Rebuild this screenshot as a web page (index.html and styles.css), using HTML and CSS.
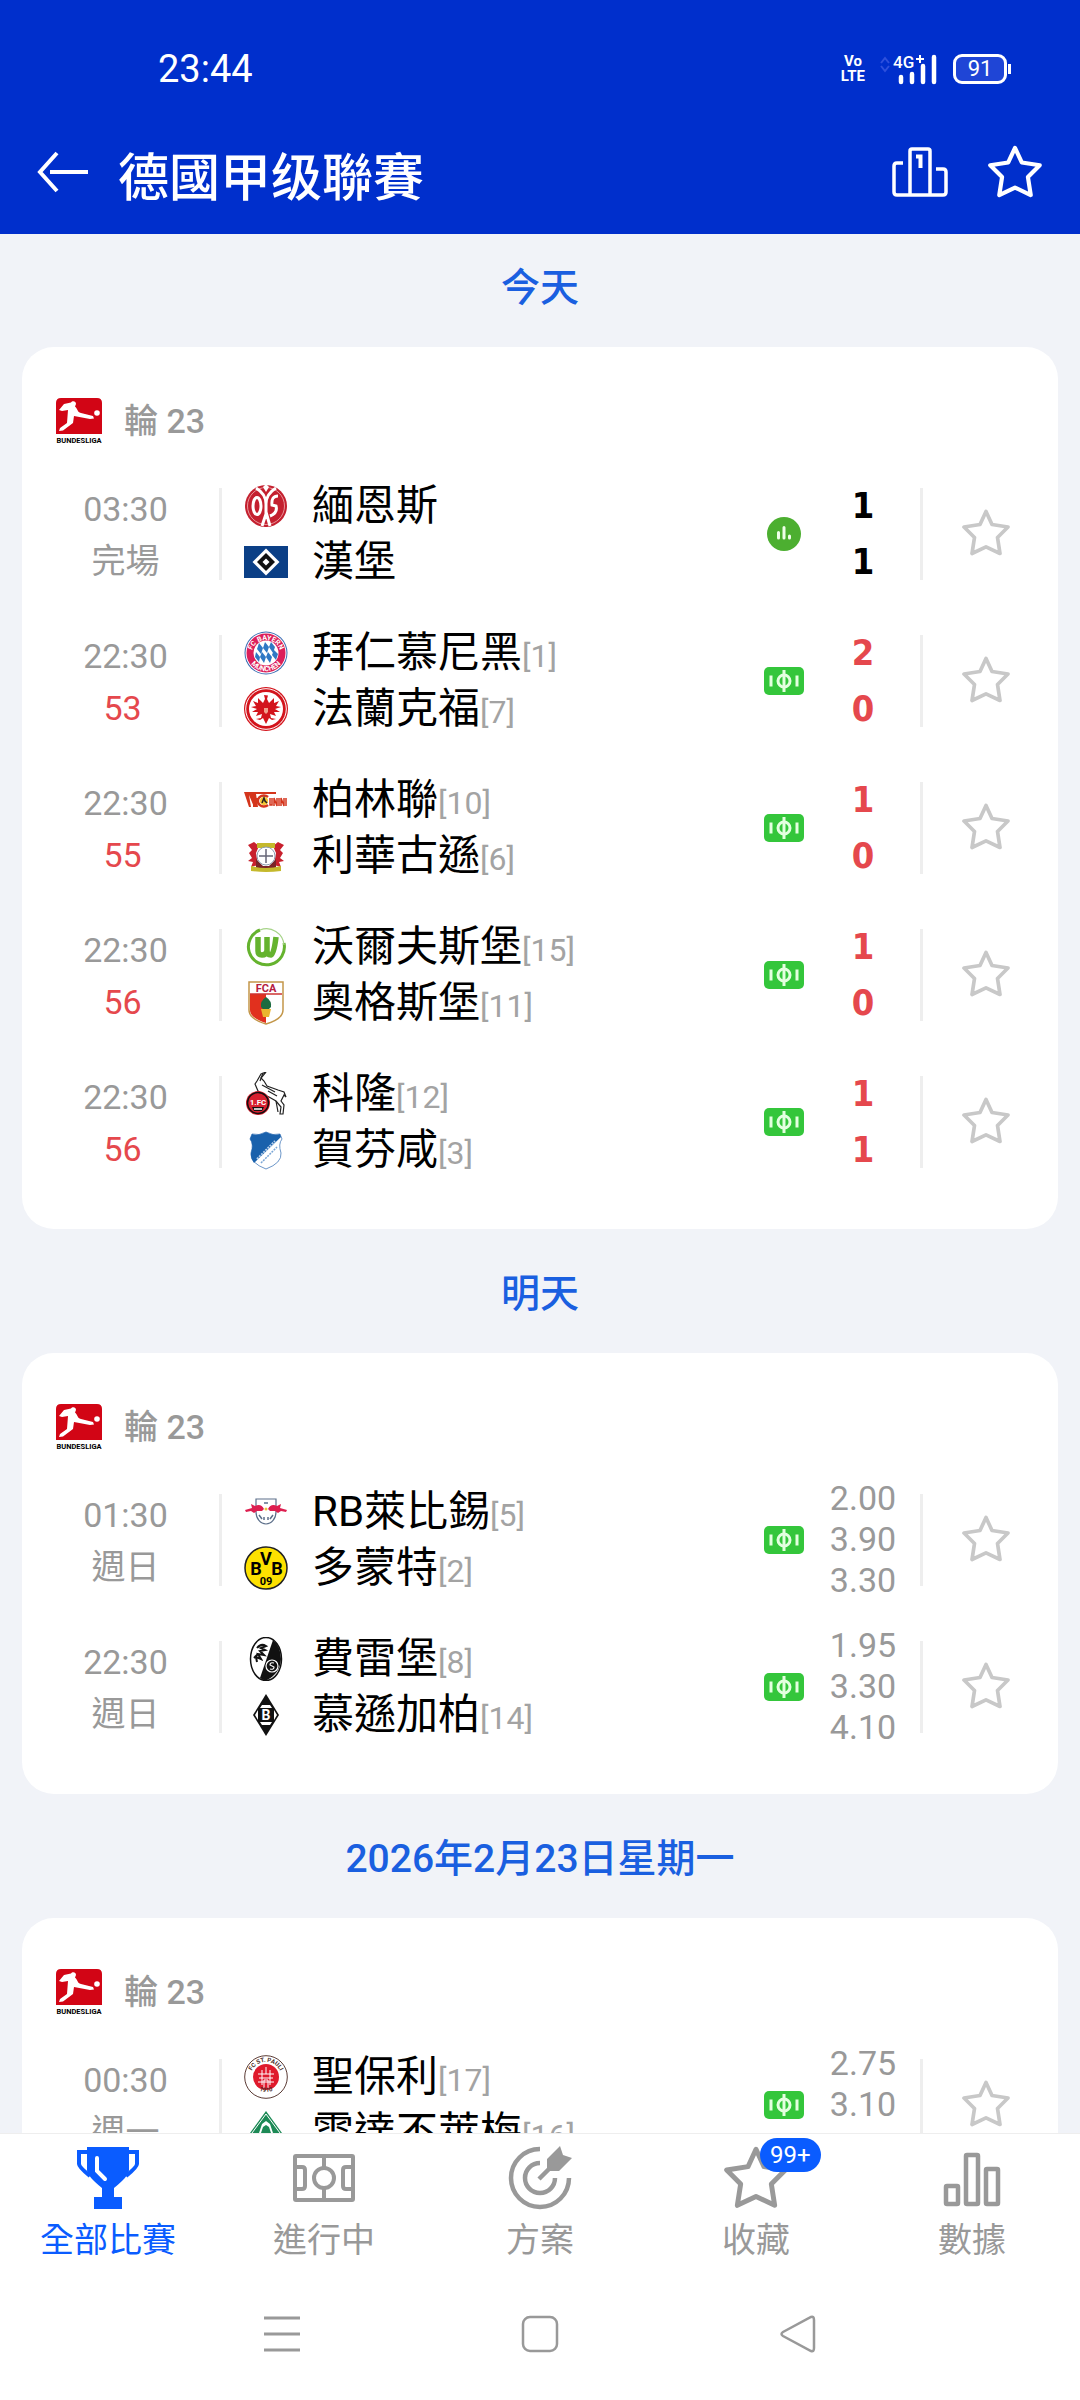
FILE: index.html
```
<!DOCTYPE html>
<html lang="zh-Hant">
	<head>
		<meta charset="UTF-8">
		<meta name="viewport" content="width=device-width, initial-scale=1">
		<title>德國甲级聯賽</title>
		<link rel="stylesheet" href="styles.css">
	</head>
	<body>
		<!-- 圖標 -->
		<svg class="sprite" aria-hidden="true">
			<symbol id="star" viewBox="0 0 48 48">
				<path d="M24 2.5L30 15.5L46 18L35.5 28.5L38 44.5L24 37.8L10 44.5L12.5 28.5L2 18L18 15.5Z" fill="none" stroke="currentColor" stroke-width="3.7" stroke-linejoin="round"/>
			</symbol>
			<symbol id="live" viewBox="0 0 40 30">
				<rect x="0" y="1" width="40" height="28" rx="5" fill="#34c63b"/>
				<g fill="none" stroke="#e4ffe0" stroke-width="3">
					<path d="M7 9.500V20.500M33 9.500V20.500M20 4V26"/>
					<circle cx="20" cy="15" r="6"/>
				</g>
			</symbol>
		</svg>

		<header class="header">
			<div class="status">
				<span class="clock">23:44</span>
				<div class="status-icons">
					<span class="volte"><b>Vo</b><b>LTE</b></span>
					<svg width="60" height="32" viewBox="0 0 60 32" role="img" aria-label="4G+">
						<path d="M2 10L6 5L10 10M2 13L6 18L10 13" fill="none" stroke="#2e50dc" stroke-width="2"/>
						<text x="14" y="15" font-size="17" fill="#fff" font-family="Roboto, sans-serif" font-weight="500">4G</text>
						<path d="M37 6H45M41 2V10" stroke="#fff" stroke-width="2"/>
						<path d="M22 24V29M33 21V29M44 13V29M55 4V29" stroke="#fff" stroke-width="4.500" stroke-linecap="round"/>
					</svg>
					<span class="battery">91</span>
				</div>
			</div>
			<div class="title-bar">
				<button class="icon-btn" type="button" aria-label="返回">
					<svg width="54" height="44" viewBox="0 0 54 44"><path d="M21 3L4 22L21 41M14 22H52" fill="none" stroke="#fff" stroke-width="4"/></svg>
				</button>
				<h1>德國甲级聯賽</h1>
				<button class="icon-btn" type="button" aria-label="排名">
					<svg width="56" height="52" viewBox="0 0 56 52"><path d="M18 49V5Q18 3 20 3H36Q38 3 38 5V49M11 17H5Q2 17 2 20V46Q2 49 5 49H51Q54 49 54 46V26Q54 23 51 23H44" fill="none" stroke="#fff" stroke-width="3.500" stroke-linejoin="round"/><path d="M24 10.500H28.500V22" fill="none" stroke="#fff" stroke-width="4"/></svg>
				</button>
				<button class="icon-btn" type="button" aria-label="收藏聯賽">
					<svg width="54" height="54"><use href="#star"/></svg>
				</button>
			</div>
		</header>

		<main class="list">
			<section class="day">
				<h2>今天</h2>
				<div class="card">
					<div class="round">
						<svg width="46" height="46" viewBox="0 0 46 46">
							<path d="M0 36V5Q0 0 5 0H41Q46 0 46 5V36Z" fill="#d20515"/>
							<path d="M15 4.500C16 2.500 20 2.500 20 6L19 8.500C22 11 21 14 25 15L37 18L38 20.500L34 21L18 18L17 25L7 32.500L3 33L4 30L11 25L12 12L6 13L3 12L8 6Z" fill="#fff"/>
							<circle cx="41" cy="15" r="2.800" fill="#fff"/>
							<text class="logo-text" x="23" y="45" font-size="7.500">BUNDESLIGA</text>
						</svg>
						<span>輪 23</span>
					</div>
					<ul>
						<li class="match">
							<div class="time"><span>03:30</span><span>完場</span></div>
							<div class="teams">
								<div class="team">
									<svg viewBox="0 0 44 44">
										<circle cx="22" cy="22" r="21" fill="#c4202f"/>
										<circle cx="22" cy="22" r="18.500" fill="none" stroke="#e9959a" stroke-width="1"/>
										<g fill="none" stroke="#fff" stroke-width="3">
											<ellipse cx="13" cy="22" rx="4" ry="8.500"/>
											<path d="M12 4Q22 10 22 20V30L18 42M32 4Q22 10 22 20M22 28L26 42M34 12Q27 12 28 21L32 22Q34 29 26 32"/>
										</g>
										<path d="M19 3L22 0L25 3L22 8Z" fill="#fff"/>
									</svg>
									<span>緬恩斯</span>
								</div>
								<div class="team">
									<svg viewBox="0 0 44 44">
										<rect y="6" width="44" height="32" fill="#0b3f86"/>
										<path d="M22 8.500L35.500 22L22 35.500L8.500 22Z" fill="#fff"/>
										<path d="M22 13L31 22L22 31L13 22Z" fill="#111"/>
										<path d="M22 18.500L25.500 22L22 25.500L18.500 22Z" fill="#fff"/>
									</svg>
									<span>漢堡</span>
								</div>
							</div>
							<svg class="tag" width="34" height="34" viewBox="0 0 34 34">
								<circle cx="17" cy="17" r="17" fill="#4caf30"/>
								<path d="M11.500 15.500V21M17 10.500V21M22.500 19V21" stroke="#efffe8" stroke-width="3" stroke-linecap="round"/>
							</svg>
							<div class="score"><b>1</b><b>1</b></div>
							<button class="fav" type="button" aria-label="收藏"><svg width="48" height="48"><use href="#star"/></svg></button>
						</li>
						<li class="match live">
							<div class="time"><span>22:30</span><span>53</span></div>
							<div class="teams">
								<div class="team">
									<svg viewBox="0 0 44 44">
										<circle cx="22" cy="22" r="21.500" fill="#3b6cb3"/>
										<circle cx="22" cy="22" r="20.500" fill="#fff"/>
										<circle cx="22" cy="22" r="19.500" fill="#dc1f5a"/>
										<circle cx="22" cy="22" r="12.500" fill="#fff"/>
										<path d="M15 12L19 17L17 23L13 18ZM21 11L25 16L23 22L19 17ZM27 11L31 16L29 22L25 16ZM12 21L16 26L15 31L11 26ZM18 21L22 26L20 32L16 26ZM24 21L28 26L26 32L22 26ZM30 19L34 23L32 29L28 24Z" fill="#2f78c4"/>
										<path id="bayern-top" d="M9 30A14.500 14.500 0 1 1 35 30" fill="none"/>
										<path id="bayern-bottom" d="M4 26A18.500 18.500 0 0 0 40 26" fill="none"/>
										<text class="logo-text white" font-size="7"><textPath href="#bayern-top" startOffset="50%">FC BAYERN</textPath></text>
										<text class="logo-text white" font-size="7"><textPath href="#bayern-bottom" startOffset="50%">MÜNCHEN</textPath></text>
									</svg>
									<span>拜仁慕尼黑<small>[1]</small></span>
								</div>
								<div class="team">
									<svg viewBox="0 0 44 44">
										<circle cx="22" cy="22" r="22" fill="#d3141c"/>
										<circle cx="22" cy="22" r="20.300" fill="none" stroke="#fff" stroke-width="1"/>
										<circle cx="22" cy="22" r="17" fill="#fff"/>
										<path d="M20 8L24 8.500L23 12L25 16L30 11L30 16L35 14L32 19L37 20L31 22L36 25L30 25L32 29L26 27L27 31L32 32L28 33L25 31L22 37L19 31L16 33L12 32L17 31L18 27L12 29L14 25L8 25L13 22L7 20L12 19L9 14L14 16L14 11L19 16L21 12Z" fill="#d3141c"/>
										<path d="M20 21H24V25L22 27L20 25Z" fill="#f0a08c"/>
									</svg>
									<span>法蘭克福<small>[7]</small></span>
								</div>
							</div>
							<svg class="tag" width="40" height="30"><use href="#live"/></svg>
							<div class="score"><b>2</b><b>0</b></div>
							<button class="fav" type="button" aria-label="收藏"><svg width="48" height="48"><use href="#star"/></svg></button>
						</li>
						<li class="match live">
							<div class="time"><span>22:30</span><span>55</span></div>
							<div class="teams">
								<div class="team">
									<svg viewBox="0 0 44 44">
										<path d="M0 14H32V16H12L14 29H10L5 17L7 29H5Z" fill="#d4351c"/>
										<path d="M10 16V29M10 21H14" stroke="#d4351c" stroke-width="2"/>
										<path d="M24 19A6 5.500 0 1 0 24 27" fill="none" stroke="#d4351c" stroke-width="2.500"/>
										<circle cx="20" cy="23" r="4" fill="#f4c531"/>
										<path d="M18 25L20 20L21 23L23 25" fill="none" stroke="#222" stroke-width="1.500"/>
										<path d="M26 20V27H28V20M30 28V20L33 28V20M35 20V28M37 28V20L40 28V20M42 20V28" fill="none" stroke="#d4351c" stroke-width="1.500"/>
									</svg>
									<span>柏林聯<small>[10]</small></span>
								</div>
								<div class="team">
									<svg viewBox="0 0 44 44">
										<path d="M4 11L10 8L15 12L12 19L14 31L7 33L9 28L4 27L8 24L5 19L8 16Z" fill="#c8202d"/>
										<path d="M40 11L34 8L29 12L32 19L30 31L37 33L35 28L40 27L36 24L39 19L36 16Z" fill="#c8202d"/>
										<path d="M13 9H31V14H13Z" fill="#c5b92c"/>
										<path d="M12 25L19 32H25L32 25V34H12Z" fill="#7a2428"/>
										<circle cx="22" cy="22" r="9" fill="#fff" stroke="#8c9cb0" stroke-width="1"/>
										<path d="M22 15V29M15 22H29" stroke="#667" stroke-width="1.500"/>
										<path d="M7 32Q22 36 37 32V37Q22 39 7 37Z" fill="#c5b92c"/>
									</svg>
									<span>利華古遜<small>[6]</small></span>
								</div>
							</div>
							<svg class="tag" width="40" height="30"><use href="#live"/></svg>
							<div class="score"><b>1</b><b>0</b></div>
							<button class="fav" type="button" aria-label="收藏"><svg width="48" height="48"><use href="#star"/></svg></button>
						</li>
						<li class="match live">
							<div class="time"><span>22:30</span><span>56</span></div>
							<div class="teams">
								<div class="team">
									<svg viewBox="0 0 44 44">
										<path d="M16 5A18 18 0 1 0 40 18" fill="none" stroke="#65b32e" stroke-width="3"/>
										<path d="M16 5A17.500 17.500 0 0 1 40 20" fill="none" stroke="#a6d388" stroke-width="1.200"/>
										<path d="M14 12V26Q14 30 18 30Q22 30 23 26V12M23 26Q23 30 27 30Q30 29 32 12" fill="none" stroke="#65b32e" stroke-width="5.500"/>
									</svg>
									<span>沃爾夫斯堡<small>[15]</small></span>
								</div>
								<div class="team">
									<svg viewBox="0 0 44 44">
										<path d="M5 1H39V29Q39 38 22 43Q5 38 5 29Z" fill="#fff" stroke="#c3974a" stroke-width="1.500"/>
										<path d="M6 13H22V42Q6 37 6 29Z" fill="#e1301e"/>
										<path d="M6 13H38" stroke="#c33" stroke-width="1.500"/>
										<text class="logo-text" x="22" y="11" font-size="11" fill="#b5203f">FCA</text>
										<path d="M22 16Q28 20 27 26L24 29H20L17 26Q16 20 22 16Z" fill="#1d6b40"/>
										<path d="M17 28H27L25 36H19Z" fill="#eab52e"/>
									</svg>
									<span>奧格斯堡<small>[11]</small></span>
								</div>
							</div>
							<svg class="tag" width="40" height="30"><use href="#live"/></svg>
							<div class="score"><b>1</b><b>0</b></div>
							<button class="fav" type="button" aria-label="收藏"><svg width="48" height="48"><use href="#star"/></svg></button>
						</li>
						<li class="match live">
							<div class="time"><span>22:30</span><span>56</span></div>
							<div class="teams">
								<div class="team">
									<svg viewBox="0 0 44 44">
										<path d="M14 19L11 12L13 9L17 2L22 0L17 6L20 9L23 14L34 18L40 20L42 25L40 23L37 29L40 33L39 42L36 42L37 35L32 29L25 25L18 22Z" fill="#fff" stroke="#222" stroke-width="1.200"/>
										<path d="M16 9L19 1M18 13L31 20M24 19L33 24M32 29L34 40" stroke="#222" stroke-width="1.200"/>
										<circle cx="14" cy="31" r="12" fill="#d8202f"/>
										<circle cx="14" cy="31" r="10.500" fill="none" stroke="#111" stroke-width="1.500"/>
										<text class="logo-text white" x="14" y="33" font-size="8">1.FC</text>
										<path d="M8 35H20L18 39H10Z" fill="#111"/>
										<path d="M10 37H18" stroke="#fff" stroke-width="1.500"/>
									</svg>
									<span>科隆<small>[12]</small></span>
								</div>
								<div class="team">
									<svg viewBox="0 0 44 44">
										<path d="M8 6Q15 8 22 4Q29 8 36 6L38 11Q34 16 37 25Q38 35 22 41Q6 35 7 25Q10 16 6 11Z" fill="#fff" stroke="#6d97c9" stroke-width="1"/>
										<path d="M8 6Q15 8 22 4Q29 8 36 6L37 9L10 35Q6 30 7 25Q10 16 6 11Z" fill="#1961ac"/>
										<path d="M13 31L31 13" stroke="#b8d0ea" stroke-width="2" stroke-dasharray="2 1"/>
										<path d="M17 35L33 19" stroke="#7ba7d6" stroke-width="1.500" stroke-dasharray="2 1"/>
									</svg>
									<span>賀芬咸<small>[3]</small></span>
								</div>
							</div>
							<svg class="tag" width="40" height="30"><use href="#live"/></svg>
							<div class="score"><b>1</b><b>1</b></div>
							<button class="fav" type="button" aria-label="收藏"><svg width="48" height="48"><use href="#star"/></svg></button>
						</li>
					</ul>
				</div>
			</section>

			<section class="day">
				<h2>明天</h2>
				<div class="card">
					<div class="round">
						<svg width="46" height="46" viewBox="0 0 46 46">
							<path d="M0 36V5Q0 0 5 0H41Q46 0 46 5V36Z" fill="#d20515"/>
							<path d="M15 4.500C16 2.500 20 2.500 20 6L19 8.500C22 11 21 14 25 15L37 18L38 20.500L34 21L18 18L17 25L7 32.500L3 33L4 30L11 25L12 12L6 13L3 12L8 6Z" fill="#fff"/>
							<circle cx="41" cy="15" r="2.800" fill="#fff"/>
							<text class="logo-text" x="23" y="45" font-size="7.500">BUNDESLIGA</text>
						</svg>
						<span>輪 23</span>
					</div>
					<ul>
						<li class="match">
							<div class="time"><span>01:30</span><span>週日</span></div>
							<div class="teams">
								<div class="team">
									<svg viewBox="0 0 44 44">
										<path d="M12 9H32V22A10 12 0 0 1 12 22Z" fill="#fff" stroke="#5c6f8a" stroke-width="1.200"/>
										<path d="M1 20L8 18L7 14L11 16Q17 13 20 19L18 21L13 21L10 23L7 21L2 22Z" fill="#dd1e4f"/>
										<path d="M43 20L36 18L37 14L33 16Q27 13 24 19L26 21L31 21L34 23L37 21L42 22Z" fill="#dd1e4f"/>
										<circle cx="22" cy="19" r="1.500" fill="#eec23e"/>
										<path d="M15 25L18 29M20 27V30M24 27V30M29 25L26 29M20 13H24" fill="none" stroke="#5c6f8a" stroke-width="1.500"/>
									</svg>
									<span>RB萊比錫<small>[5]</small></span>
								</div>
								<div class="team">
									<svg viewBox="0 0 44 44">
										<circle cx="22" cy="22" r="21" fill="#fde100" stroke="#222" stroke-width="1.500"/>
										<text class="logo-text" x="12" y="29" font-size="18">B</text>
										<text class="logo-text" x="22" y="19" font-size="18">V</text>
										<text class="logo-text" x="33" y="29" font-size="18">B</text>
										<text class="logo-text" x="22" y="39" font-size="11">09</text>
									</svg>
									<span>多蒙特<small>[2]</small></span>
								</div>
							</div>
							<svg class="tag" width="40" height="30"><use href="#live"/></svg>
							<div class="odds"><span>2.00</span><span>3.90</span><span>3.30</span></div>
							<button class="fav" type="button" aria-label="收藏"><svg width="48" height="48"><use href="#star"/></svg></button>
						</li>
						<li class="match">
							<div class="time"><span>22:30</span><span>週日</span></div>
							<div class="teams">
								<div class="team">
									<svg viewBox="0 0 44 44">
										<ellipse cx="22" cy="22" rx="15.500" ry="21.500" fill="#fff" stroke="#111" stroke-width="1.500"/>
										<path d="M29 3Q37 10 37 22Q36 37 22 43.500Q19 43 16 41Z" fill="#111"/>
										<path d="M13 11Q17 6 22 9L17 11L21 13L16 14L20 18L14 17L17 22L12 20L13 25M14 17L10 21" fill="none" stroke="#111" stroke-width="2"/>
										<circle cx="28" cy="29" r="6" fill="#111" stroke="#fff" stroke-width="1.200"/>
										<path d="M30 26Q26 25 26 28L30 30Q30 33 26 32" fill="none" stroke="#fff" stroke-width="1.200"/>
									</svg>
									<span>費雷堡<small>[8]</small></span>
								</div>
								<div class="team">
									<svg viewBox="0 0 44 44">
										<path d="M22 1L35 22L22 43L9 22Z" fill="#111"/>
										<path d="M18 12H26L28 15H16ZM16 29H28L26 32H18ZM14 17V27L11 22ZM30 17V27L33 22Z" fill="#fff"/>
										<path d="M16 16H28V28H16Z" fill="#111"/>
										<text class="logo-text white" x="22" y="27" font-size="14">B</text>
									</svg>
									<span>慕遜加柏<small>[14]</small></span>
								</div>
							</div>
							<svg class="tag" width="40" height="30"><use href="#live"/></svg>
							<div class="odds"><span>1.95</span><span>3.30</span><span>4.10</span></div>
							<button class="fav" type="button" aria-label="收藏"><svg width="48" height="48"><use href="#star"/></svg></button>
						</li>
					</ul>
				</div>
			</section>

			<section class="day">
				<h2>2026年2月23日星期一</h2>
				<div class="card">
					<div class="round">
						<svg width="46" height="46" viewBox="0 0 46 46">
							<path d="M0 36V5Q0 0 5 0H41Q46 0 46 5V36Z" fill="#d20515"/>
							<path d="M15 4.500C16 2.500 20 2.500 20 6L19 8.500C22 11 21 14 25 15L37 18L38 20.500L34 21L18 18L17 25L7 32.500L3 33L4 30L11 25L12 12L6 13L3 12L8 6Z" fill="#fff"/>
							<circle cx="41" cy="15" r="2.800" fill="#fff"/>
							<text class="logo-text" x="23" y="45" font-size="7.500">BUNDESLIGA</text>
						</svg>
						<span>輪 23</span>
					</div>
					<ul>
						<li class="match">
							<div class="time"><span>00:30</span><span>週一</span></div>
							<div class="teams">
								<div class="team">
									<svg viewBox="0 0 44 44">
										<circle cx="22" cy="22" r="21.300" fill="#fff" stroke="#5a3a34" stroke-width="1"/>
										<circle cx="22" cy="22" r="13" fill="#df1a2c"/>
										<path d="M14 19H30M15 23H29M14 27H30M18 15V30M26 15V30M22 12V19M20 33V25H24V33" fill="none" stroke="#fff" stroke-width="1"/>
										<path id="pauli-top" d="M8 29A15.500 15.500 0 1 1 36 29" fill="none"/>
										<path id="pauli-bottom" d="M5 27A19.500 19.500 0 0 0 39 27" fill="none"/>
										<text class="logo-text" font-size="6" fill="#4a2c26"><textPath href="#pauli-top" startOffset="50%">FC ST. PAULI</textPath></text>
										<text class="logo-text" font-size="6" fill="#4a2c26"><textPath href="#pauli-bottom" startOffset="50%">1910</textPath></text>
									</svg>
									<span>聖保利<small>[17]</small></span>
								</div>
								<div class="team">
									<svg viewBox="0 0 44 44">
										<path d="M22 0L38 22L22 44L6 22Z" fill="#1d8a56"/>
										<path d="M22 3L36 22L22 41L8 22Z" fill="none" stroke="#fff" stroke-width="1"/>
										<path d="M15 22L18 13L22 10L26 13L29 22L25 26L22 20L19 26Z" fill="#fff"/>
										<path d="M17 22L19 16L22 14L25 16L27 22Z" fill="#1d8a56"/>
									</svg>
									<span>雲達不萊梅<small>[16]</small></span>
								</div>
							</div>
							<svg class="tag" width="40" height="30"><use href="#live"/></svg>
							<div class="odds"><span>2.75</span><span>3.10</span></div>
							<button class="fav" type="button" aria-label="收藏"><svg width="48" height="48"><use href="#star"/></svg></button>
						</li>
					</ul>
				</div>
			</section>
		</main>

		<footer>
			<nav class="tabs">
				<a class="active" href="#">
					<svg width="64" height="64" viewBox="0 0 64 64">
						<path d="M11 1H53V24Q53 30 38 42V51H46V63H18V51H26V42Q11 30 11 24Z" fill="currentColor"/>
						<path d="M12 6H3V18Q3 21 14 30M52 6H61V18Q61 21 50 30" fill="none" stroke="currentColor" stroke-width="4"/>
						<path d="M21 12V25L29 33" fill="none" stroke="#fff" stroke-width="4" stroke-linecap="round"/>
					</svg>
					<span>全部比賽</span>
				</a>
				<a href="#">
					<svg width="64" height="64" viewBox="0 0 64 64" fill="none" stroke="currentColor" stroke-width="4">
						<rect x="3" y="10" width="58" height="44" rx="1"/>
						<path d="M32 10V21M32 43V54M3 21H10Q13 21 13 24V40Q13 43 10 43H3M61 21H54Q51 21 51 24V40Q51 43 54 43H61"/>
						<circle cx="32" cy="32" r="10"/>
					</svg>
					<span>進行中</span>
				</a>
				<a href="#">
					<svg width="64" height="64" viewBox="0 0 64 64" fill="none" stroke="currentColor" stroke-width="4.500">
						<path d="M32 3A29 29 0 1 0 61 32M32 17A15 15 0 1 0 47 32M31 33L44 20"/>
						<path d="M39 13L52 0L55 9L64 12L51 25H39Z" fill="currentColor" stroke="none"/>
					</svg>
					<span>方案</span>
				</a>
				<a href="#">
					<svg width="64" height="64"><use href="#star"/></svg>
					<span>收藏</span>
					<em class="badge">99+</em>
				</a>
				<a href="#">
					<svg width="64" height="64" viewBox="0 0 64 64" fill="none" stroke="currentColor" stroke-width="4.500">
						<rect x="6" y="40" width="12" height="18" rx="1"/>
						<rect x="26" y="9" width="12" height="49" rx="1"/>
						<rect x="46" y="23" width="12" height="35" rx="1"/>
					</svg>
					<span>數據</span>
				</a>
			</nav>
			<div class="system-nav">
				<button class="icon-btn" type="button" aria-label="最近"><svg width="40" height="40" viewBox="0 0 40 40"><path d="M2 4H38M2 20H38M2 36H38" stroke="#999" stroke-width="3"/></svg></button>
				<button class="icon-btn" type="button" aria-label="主頁"><svg width="40" height="40" viewBox="0 0 40 40"><rect x="3" y="3" width="34" height="34" rx="7" fill="none" stroke="#999" stroke-width="2.500"/></svg></button>
				<button class="icon-btn" type="button" aria-label="返回鍵"><svg width="40" height="40" viewBox="0 0 40 40"><path d="M33 3Q36 2 36 6V34Q36 38 33 37L5 22Q2 20 5 18Z" fill="none" stroke="#999" stroke-width="2.500"/></svg></button>
			</div>
		</footer>
	</body>
</html>
```
FILE: styles.css
```
*{
	margin: 0;
	padding: 0;
	box-sizing: border-box;
}
body{
	display: flex;
	flex-direction: column;
	height: 100vh;
	overflow: hidden;
	background-color: #f1f3f8;
	color: #000;
	font-family: Roboto, "Noto Sans CJK TC", sans-serif;
}
ul{
	list-style: none;
}
svg{
	display: block;
	flex-shrink: 0;
}
button{
	border: none;
	background: none;
	color: inherit;
	cursor: pointer;
}
.sprite{
	position: absolute;
	width: 0;
	height: 0;
}
.icon-btn{
	display: flex;
	align-items: center;
	justify-content: center;
}
.logo-text{
	font-family: Roboto, sans-serif;
	font-weight: 700;
	text-anchor: middle;
}
.logo-text.white{
	fill: #fff;
}

/*頂部*/
.header{
	flex-shrink: 0;
	padding: 24px 38px 2px 36px;
	background-color: #002fcc;
	color: #fff;
}
.status{
	display: flex;
	justify-content: space-between;
	align-items: center;
	height: 88px;
	padding: 2px 35px 0 122px;
}
.clock{
	font-size: 38px;
}
.status-icons{
	display: flex;
	align-items: center;
	gap: 14px;
}
.volte{
	display: flex;
	flex-direction: column;
	align-items: center;
	font-size: 15px;
	line-height: 15px;
}
.battery{
	position: relative;
	width: 54px;
	height: 30px;
	border: 3px solid #fff;
	border-radius: 9px;
	background-color: #1f45d6;
	font-size: 22px;
	line-height: 24px;
	text-align: center;
}
.battery::after{
	content: "";
	position: absolute;
	top: 7px;
	right: -7px;
	width: 3px;
	height: 10px;
	background-color: #fff;
}
.title-bar{
	display: flex;
	align-items: center;
	height: 120px;
}
.title-bar h1{
	flex: 1;
	margin-left: 28px;
	padding-top: 4px;
	font-size: 51px;
	font-weight: 500;
}
.title-bar .icon-btn + .icon-btn{
	margin-left: 40px;
}

/*比賽列表*/
.list{
	flex: 1;
	min-height: 0;
	overflow: hidden;
}
.day{
	padding: 0 22px;
}
.day h2{
	padding: 37px 0 31px;
	color: #1a5fe0;
	font-size: 39px;
	font-weight: 500;
	line-height: 56px;
	text-align: center;
}
.day:first-child h2{
	padding-top: 26px;
}
.card{
	padding-bottom: 34px;
	border-radius: 32px;
	background-color: #fff;
}
.round{
	display: flex;
	align-items: center;
	gap: 22px;
	padding: 51px 34px 16px;
	color: #999;
	font-size: 34px;
	font-weight: 500;
	line-height: 46px;
}
.match{
	display: grid;
	grid-template-columns: 200px 1fr 60px 106px 138px;
	align-items: center;
	height: 147px;
}
.time{
	display: flex;
	flex-direction: column;
	justify-content: center;
	height: 92px;
	padding: 2px 0 0 10px;
	border-right: 3px solid #eee;
	color: #999;
	font-size: 34px;
	line-height: 52px;
	text-align: center;
}
.live .time span:last-child{
	padding-right: 6px;
	color: #e5484d;
}
.teams{
	padding-left: 22px;
}
.team{
	display: flex;
	align-items: center;
	gap: 24px;
	height: 56px;
	font-size: 42px;
	line-height: 56px;
	white-space: nowrap;
}
.team svg{
	width: 44px;
	height: 44px;
}
.team small{
	color: #a3a3a3;
	font-size: 32px;
	line-height: 32px;
}
.tag{
	justify-self: center;
}
.score,
.odds{
	display: flex;
	flex-direction: column;
	padding-right: 8px;
	text-align: center;
}
.score{
	font-family: "DejaVu Sans Condensed", "DejaVu Sans", sans-serif;
	font-size: 36px;
	line-height: 56px;
}
.live .score{
	color: #e5484d;
}
.odds{
	height: 123px;
	color: #999;
	font-size: 34px;
	line-height: 41px;
}
.fav{
	display: flex;
	align-items: center;
	justify-content: center;
	height: 92px;
	padding: 0 10px 2px 0;
	border-left: 3px solid #eee;
	color: #c8c8c8;
}

/*底部*/
footer{
	flex-shrink: 0;
	background-color: #fff;
}
.tabs{
	display: flex;
	border-top: 1px solid #eee;
}
.tabs a{
	position: relative;
	display: flex;
	flex: 1;
	flex-direction: column;
	align-items: center;
	gap: 8px;
	padding: 12px 0 6px;
	color: #999;
	font-size: 34px;
	line-height: 44px;
	text-decoration: none;
}
.tabs .active{
	color: #0a5cff;
}
.badge{
	position: absolute;
	top: 4px;
	left: 50%;
	margin-left: 4px;
	padding: 0 10px;
	border-radius: 17px;
	background-color: #0a5cff;
	color: #fff;
	font-size: 24px;
	font-style: normal;
	line-height: 34px;
}
.system-nav{
	display: flex;
	justify-content: center;
	gap: 218px;
	height: 132px;
}
```
